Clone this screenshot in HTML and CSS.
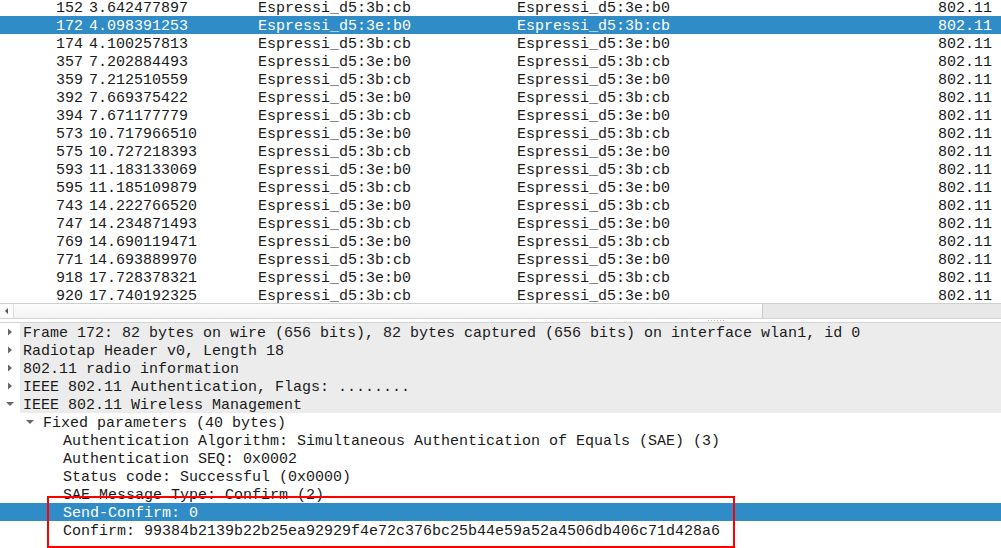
FILE: index.html
```html
<!DOCTYPE html>
<html>
<head>
<meta charset="utf-8">
<link rel="stylesheet" href="styles.css">
</head>
<body>
<div class="app">
  <div class="list">
    <div class="rows">
      <div class="row"><span class="no">152</span><span>3.642477897</span><span>Espressi_d5:3b:cb</span><span>Espressi_d5:3e:b0</span><span class="proto">802.11</span></div>
      <div class="row sel"><span class="no">172</span><span>4.098391253</span><span>Espressi_d5:3e:b0</span><span>Espressi_d5:3b:cb</span><span class="proto">802.11</span></div>
      <div class="row"><span class="no">174</span><span>4.100257813</span><span>Espressi_d5:3b:cb</span><span>Espressi_d5:3e:b0</span><span class="proto">802.11</span></div>
      <div class="row"><span class="no">357</span><span>7.202884493</span><span>Espressi_d5:3e:b0</span><span>Espressi_d5:3b:cb</span><span class="proto">802.11</span></div>
      <div class="row"><span class="no">359</span><span>7.212510559</span><span>Espressi_d5:3b:cb</span><span>Espressi_d5:3e:b0</span><span class="proto">802.11</span></div>
      <div class="row"><span class="no">392</span><span>7.669375422</span><span>Espressi_d5:3e:b0</span><span>Espressi_d5:3b:cb</span><span class="proto">802.11</span></div>
      <div class="row"><span class="no">394</span><span>7.671177779</span><span>Espressi_d5:3b:cb</span><span>Espressi_d5:3e:b0</span><span class="proto">802.11</span></div>
      <div class="row"><span class="no">573</span><span>10.717966510</span><span>Espressi_d5:3e:b0</span><span>Espressi_d5:3b:cb</span><span class="proto">802.11</span></div>
      <div class="row"><span class="no">575</span><span>10.727218393</span><span>Espressi_d5:3b:cb</span><span>Espressi_d5:3e:b0</span><span class="proto">802.11</span></div>
      <div class="row"><span class="no">593</span><span>11.183133069</span><span>Espressi_d5:3e:b0</span><span>Espressi_d5:3b:cb</span><span class="proto">802.11</span></div>
      <div class="row"><span class="no">595</span><span>11.185109879</span><span>Espressi_d5:3b:cb</span><span>Espressi_d5:3e:b0</span><span class="proto">802.11</span></div>
      <div class="row"><span class="no">743</span><span>14.222766520</span><span>Espressi_d5:3e:b0</span><span>Espressi_d5:3b:cb</span><span class="proto">802.11</span></div>
      <div class="row"><span class="no">747</span><span>14.234871493</span><span>Espressi_d5:3b:cb</span><span>Espressi_d5:3e:b0</span><span class="proto">802.11</span></div>
      <div class="row"><span class="no">769</span><span>14.690119471</span><span>Espressi_d5:3e:b0</span><span>Espressi_d5:3b:cb</span><span class="proto">802.11</span></div>
      <div class="row"><span class="no">771</span><span>14.693889970</span><span>Espressi_d5:3b:cb</span><span>Espressi_d5:3e:b0</span><span class="proto">802.11</span></div>
      <div class="row"><span class="no">918</span><span>17.728378321</span><span>Espressi_d5:3e:b0</span><span>Espressi_d5:3b:cb</span><span class="proto">802.11</span></div>
      <div class="row"><span class="no">920</span><span>17.740192325</span><span>Espressi_d5:3b:cb</span><span>Espressi_d5:3e:b0</span><span class="proto">802.11</span></div>
    </div>
  </div>
  <div class="hscroll">
    <div class="sbtn"><svg width="6" height="8" viewBox="0 0 6 8"><path d="M4 1 L1 4 L4 7 Z" fill="#555"/></svg></div>
    <div class="thumb"></div>
    <div class="trough"></div>
  </div>
  <div class="splitter"><span class="grip"></span></div>
  <div class="tree">
    <div class="node top"><span class="tw"><svg width="8" height="8" viewBox="0 0 8 8"><path d="M2 0.5 L6 4 L2 7.5 Z" fill="#666"/></svg></span><span class="lbl">Frame 172: 82 bytes on wire (656 bits), 82 bytes captured (656 bits) on interface wlan1, id 0</span></div>
    <div class="node top"><span class="tw"><svg width="8" height="8" viewBox="0 0 8 8"><path d="M2 0.5 L6 4 L2 7.5 Z" fill="#666"/></svg></span><span class="lbl">Radiotap Header v0, Length 18</span></div>
    <div class="node top"><span class="tw"><svg width="8" height="8" viewBox="0 0 8 8"><path d="M2 0.5 L6 4 L2 7.5 Z" fill="#666"/></svg></span><span class="lbl">802.11 radio information</span></div>
    <div class="node top"><span class="tw"><svg width="8" height="8" viewBox="0 0 8 8"><path d="M2 0.5 L6 4 L2 7.5 Z" fill="#666"/></svg></span><span class="lbl">IEEE 802.11 Authentication, Flags: ........</span></div>
    <div class="node top"><span class="tw"><svg width="10" height="8" viewBox="0 0 10 8"><path d="M1 2 L9 2 L5 6 Z" fill="#666"/></svg></span><span class="lbl">IEEE 802.11 Wireless Management</span></div>
    <div class="node l1"><span class="tw"><svg width="10" height="8" viewBox="0 0 10 8"><path d="M1 2 L9 2 L5 6 Z" fill="#666"/></svg></span><span class="lbl">Fixed parameters (40 bytes)</span></div>
    <div class="node l2"><span class="lbl">Authentication Algorithm: Simultaneous Authentication of Equals (SAE) (3)</span></div>
    <div class="node l2"><span class="lbl">Authentication SEQ: 0x0002</span></div>
    <div class="node l2"><span class="lbl">Status code: Successful (0x0000)</span></div>
    <div class="node l2"><span class="lbl">SAE Message Type: Confirm (2)</span></div>
    <div class="node l2 sel"><span class="lbl">Send-Confirm: 0</span></div>
    <div class="node l2"><span class="lbl">Confirm: 99384b2139b22b25ea92929f4e72c376bc25b44e59a52a4506db406c71d428a6</span></div>
  </div>
  <div class="mark"></div>
</div>
</body>
</html>
```

FILE: styles.css
```css
html, body {
  margin: 0;
  padding: 0;
  background: #ffffff;
}
body {
  width: 1001px;
  height: 548px;
  overflow: hidden;
  font-family: "Liberation Mono", "DejaVu Sans Mono", monospace;
  font-size: 15px;
  color: #1a1a1a;
}
.app {
  position: relative;
  width: 1001px;
  height: 548px;
  overflow: hidden;
}
.list {
  height: 303px;
  overflow: hidden;
  border-bottom: 1px solid #cfcfcf;
}
.rows {
  margin-top: -2px;
}
.row {
  display: grid;
  grid-template-columns: 84px 169px 259px 1fr 100px;
  height: 16px;
  padding-top: 2px;
  line-height: 18px;
  white-space: nowrap;
}
.row span {
  padding-left: 5px;
}
.row .no {
  padding-left: 0;
  padding-right: 1px;
  text-align: right;
}
.row .proto {
  text-align: right;
  padding-right: 9px;
}
.row.sel, .node.sel {
  background: #308cc6;
  color: #ffffff;
}
.hscroll {
  display: flex;
  height: 14px;
  border-bottom: 1px solid #d4d4d4;
}
.sbtn {
  width: 13px;
  display: flex;
  align-items: center;
  justify-content: center;
  background: #fbfbfb;
  border-right: 1px solid #dcdcdc;
}
.thumb {
  width: 748px;
  background: linear-gradient(#fdfdfd, #f3f3f3);
  border-right: 1px solid #c9c9c9;
}
.trough {
  flex: 1;
  background: #e8e8e8;
}
.splitter {
  height: 3px;
  display: flex;
  justify-content: center;
  padding-left: 430px;
  border-bottom: 1px solid #d4d4d4;
}
.grip {
  width: 16px;
  height: 1px;
  margin-top: 1px;
  background: repeating-linear-gradient(90deg, #b8b8b8 0 1px, transparent 1px 3px);
}
.node {
  display: flex;
  align-items: stretch;
  height: 18px;
  white-space: nowrap;
}
.lbl {
  height: 16px;
  padding-top: 2px;
  line-height: 18px;
}
.tw {
  width: 20px;
  height: 18px;
  display: flex;
  align-items: center;
  justify-content: center;
  flex: none;
}
.node.top .lbl {
  flex: 1;
  background: #ececec;
  padding-left: 3px;
}
.node.l1 {
  padding-left: 20px;
}
.node.l1 .lbl {
  padding-left: 3px;
}
.node.l2 {
  padding-left: 63px;
}
.mark {
  position: absolute;
  left: 47px;
  top: 496px;
  width: 684px;
  height: 48px;
  border: 2px solid #ff0000;
}
```
